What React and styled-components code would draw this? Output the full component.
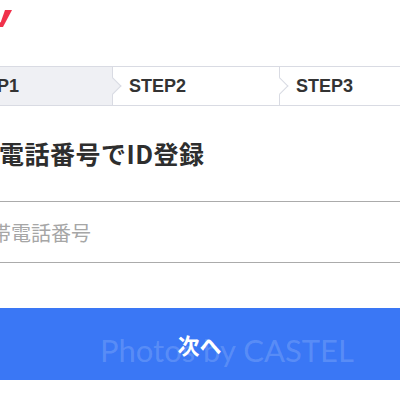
import React from "react";
import styled, { createGlobalStyle } from "styled-components";

const Global = createGlobalStyle`
  html, body {
    margin: 0;
    padding: 0;
    overflow: hidden;
    background: #fff;
  }
  body {
    font-family: "Noto Sans CJK JP", "Noto Sans", sans-serif;
  }
`;

const Page = styled.div`
  width: 507px;
  margin-left: -54px;
  display: flex;
  flex-direction: column;
`;

const Header = styled.header`
  height: 66px;
  display: flex;
  align-items: flex-start;
  padding: 9px 0 0 24px;
  box-sizing: border-box;
`;

const Steps = styled.ol`
  display: flex;
  margin: 0;
  padding: 0;
  list-style: none;
  border-top: 1px solid #d9dbe3;
  border-bottom: 1px solid #d9dbe3;
`;

const Step = styled.li`
  position: relative;
  flex: ${p => (p.last ? "1" : "0 0 167px")};
  height: 38px;
  box-sizing: border-box;
  display: flex;
  align-items: center;
  padding-left: 16px;
  background: ${p => (p.active ? "#eff0f4" : "#fff")};
  border-right: ${p => (p.last ? "none" : "1px solid #d9dbe3")};
  font-family: "Liberation Sans", Arial, sans-serif;
  font-weight: 700;
  font-size: 18px;
  color: #333;

  &::after {
    content: "";
    display: ${p => (p.last ? "none" : "block")};
    position: absolute;
    z-index: 1;
    top: 50%;
    right: -1px;
    width: 11px;
    height: 11px;
    background: ${p => (p.active ? "#eff0f4" : "#fff")};
    border-top: 1px solid #d9dbe3;
    border-right: 1px solid #d9dbe3;
    transform: translate(50%, -50%) rotate(45deg);
  }
`;

const Content = styled.main`
  padding-left: 8px;
  display: flex;
  flex-direction: column;
`;

const Title = styled.h1`
  margin: 29px 0 0 -6px;
  font-size: 25px;
  line-height: 36px;
  font-weight: 700;
  letter-spacing: 0.5px;
  color: #2e2e2e;
`;

const Field = styled.input`
  margin-top: 30px;
  height: 62px;
  box-sizing: border-box;
  border: none;
  border-top: 1px solid #ababab;
  border-bottom: 1px solid #ababab;
  padding: 0 0 0 17px;
  font-family: "Noto Sans CJK JP", sans-serif;
  font-size: 20px;
  color: #333;
  outline: none;
  background: transparent;

  &::placeholder {
    color: #a6a6a6;
  }
`;

const NextButton = styled.button`
  position: relative;
  margin-top: 45px;
  height: 72px;
  border: none;
  background: #3a77f5;
  color: #fff;
  font-family: "Noto Sans CJK JP", sans-serif;
  font-size: 22px;
  font-weight: 700;
  cursor: pointer;
  overflow: hidden;
`;

const Label = styled.span`
  position: relative;
  z-index: 1;
`;

const Watermark = styled.span`
  position: absolute;
  left: 154px;
  top: 27px;
  font-family: Lato, "Open Sans", sans-serif;
  font-weight: 400;
  font-size: 31px;
  line-height: 31px;
  color: rgba(255, 255, 255, 0.17);
  white-space: nowrap;
  pointer-events: none;
`;

const Logo = () => (
  <svg width="42" height="20" viewBox="0 0 42 20">
    <polygon points="17,1 24,1 33,18 29,18" fill="#f0314b" />
    <polygon points="35,1 42,1 33,18 29,18" fill="#f0314b" />
  </svg>
);

export default function App() {
  return (
    <>
      <Global />
      <Page>
        <Header>
          <Logo />
        </Header>
        <Steps>
          <Step active>STEP1</Step>
          <Step>STEP2</Step>
          <Step last>STEP3</Step>
        </Steps>
        <Content>
          <Title>携帯電話番号でID登録</Title>
          <Field type="tel" placeholder="携帯電話番号" />
        </Content>
        <NextButton>
          <Watermark>Photos by CASTEL</Watermark>
          <Label>次へ</Label>
        </NextButton>
      </Page>
    </>
  );
}
